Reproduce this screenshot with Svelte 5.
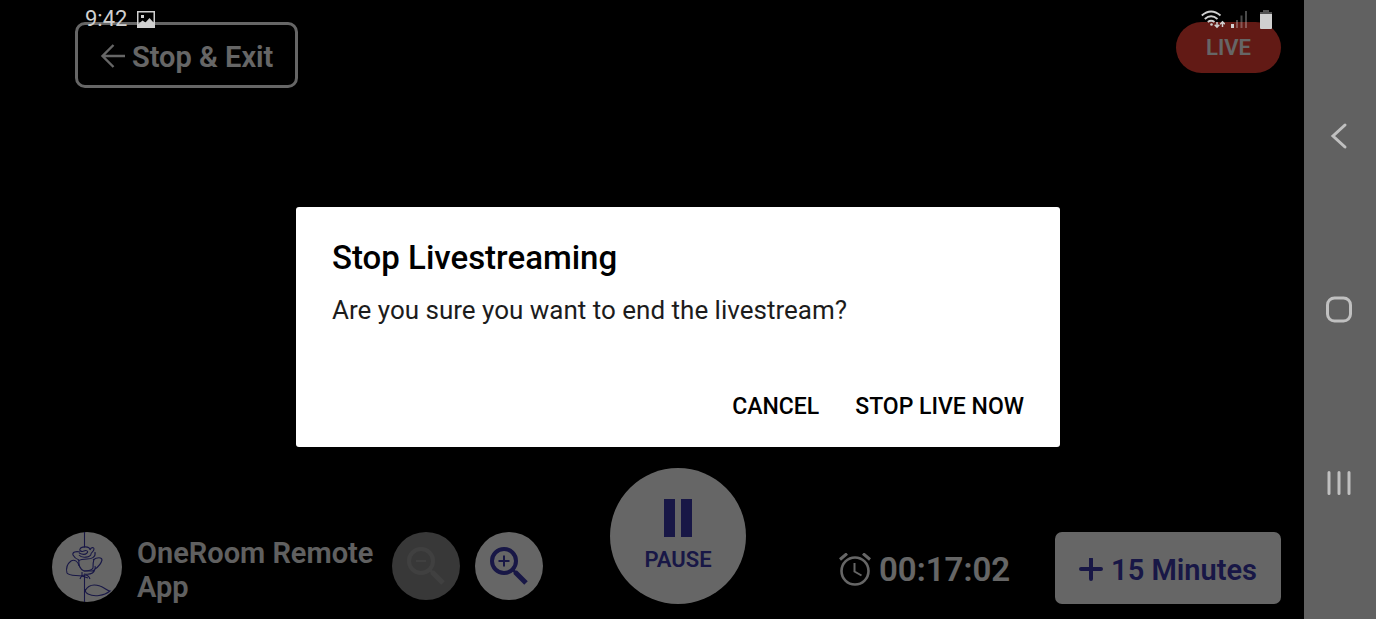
<script lang="ts">
  let time = $state('9:42');
  let dialogOpen = $state(true);
  let paused = $state(false);
  let seconds = $state(17 * 60 + 2);

  const pad = (n: number) => String(n).padStart(2, '0');

  let elapsed = $derived(
    `${pad(Math.floor(seconds / 3600))}:${pad(Math.floor(seconds / 60) % 60)}:${pad(seconds % 60)}`
  );
</script>

<div class="device">
  <div class="screen">
    <main class="stream">
      <header class="top">
        <button class="exit" onclick={() => (dialogOpen = true)}>
          <svg width="26" height="26" viewBox="0 0 26 26" fill="none" stroke="currentColor" stroke-width="2.4">
            <path d="M25 12H2.500M13.500 1L2.500 12L13.500 23" />
          </svg>
          Stop &amp; Exit
        </button>
        <span class="live">LIVE</span>
      </header>

      <footer class="bottom">
        <div class="left">
          <svg class="avatar" viewBox="0 0 70 70" fill="none" stroke="#3c3aae" stroke-width="1.1">
            <circle cx="35" cy="35" r="35" fill="#fff" stroke="none" />
            <path d="M32.500 0V15.500M32.500 43V70" />
            <path d="M38 18c0-4-9-4-10-1-1 2 2 3 4 2s5 0 3 2-6 1-8 0M38 18c1-3 4-3 4-1 0 3-3 3-3 5 0 3-9 5-12 1" />
            <path d="M28 20c-4-1-8 0-7 3 1 2 3 4 6 5M43 20c1 5-3 7-8 7-4 0-6 0-9 2" />
            <path d="M27 28c-1 6 1 9 5 11 4 0 8-1 9-3 0-4 0-6 1-9" />
            <path d="M27 34c-1-5-5-7-8-5-4 3-5 8-4 12 2 3 8 2 15 3v-4" />
            <path d="M41 28c4-3 9-3 9 0-1 4-4 7-7 9-1 4-5 6-11 5M43 34c1 3-1 5-4 5h-7" />
            <path d="M28 47c1-3 3-4 5-4 2 0 4 1 5 4M30 44l6 2" />
            <path d="M33 59c3-6 9-7 15-5 4 1 7 5 10 5-6 5-16 6-22 3-2-1-3-3-3-5" />
          </svg>
          <p class="name">OneRoom Remote App</p>
          <button class="round" aria-label="Zoom out" disabled>
            <svg width="38" height="38" viewBox="0 0 38 38" fill="none" stroke="currentColor">
              <circle cx="14" cy="14" r="12" stroke-width="4" />
              <path d="M9 14h10" stroke-width="2" />
              <path d="M22 22l4 4" stroke-width="3" />
              <path d="M25 25l11 11" stroke-width="5" />
            </svg>
          </button>
          <button class="round" aria-label="Zoom in">
            <svg width="38" height="38" viewBox="0 0 38 38" fill="none" stroke="currentColor">
              <circle cx="14" cy="14" r="12" stroke-width="4" />
              <path d="M8.500 14h11M14 8.500v11" stroke-width="2" />
              <path d="M22 22l4 4" stroke-width="3" />
              <path d="M25 25l11 11" stroke-width="5" />
            </svg>
          </button>
        </div>

        <button class="pause" onclick={() => (paused = !paused)}>
          <svg width="28" height="38" viewBox="0 0 28 38" fill="currentColor">
            {#if paused}
              <path d="M0 0L28 19L0 38z" />
            {:else}
              <path d="M0 0h11v38H0zM17 0h11v38H17z" />
            {/if}
          </svg>
          {paused ? 'RESUME' : 'PAUSE'}
        </button>

        <div class="right">
          <div class="timer">
            <svg width="32" height="34" viewBox="0 0 32 34" fill="none" stroke="currentColor" stroke-width="2.600">
              <circle cx="16" cy="18" r="13.500" />
              <path d="M15.500 10v8.500l7 4" stroke-width="2" />
              <path d="M1 6.500l7-6M31 6.500l-7-6" stroke-width="3" />
            </svg>
            <span>{elapsed}</span>
          </div>
          <button class="extend">
            <svg width="24" height="24" viewBox="0 0 24 24" fill="none" stroke="currentColor" stroke-width="4" stroke-linecap="round">
              <path d="M12 1v20M2 11h20" />
            </svg>
            15 Minutes
          </button>
        </div>
      </footer>
    </main>

    {#if dialogOpen}
      <div class="scrim">
        <div class="dialog" role="alertdialog" aria-labelledby="dialog-title" aria-describedby="dialog-text">
          <h2 id="dialog-title">Stop Livestreaming</h2>
          <p id="dialog-text">Are you sure you want to end the livestream?</p>
          <div class="actions">
            <button onclick={() => (dialogOpen = false)}>CANCEL</button>
            <button onclick={() => (dialogOpen = false)}>STOP LIVE NOW</button>
          </div>
        </div>
      </div>
    {/if}

    <!-- Android status bar, drawn over the app -->
    <div class="status">
      <span>{time}</span>
      <svg width="18" height="17" viewBox="0 0 18 17">
        <path fill="currentColor" fill-rule="evenodd" d="M0 0h18v17H0zM1.500 1.500V13l4-3.500 3 2 4-4.500 4 4.500V1.500zM4 4h3v3H4z" />
      </svg>
      <div class="signals">
        <svg width="24" height="19" viewBox="0 0 24 19" fill="none" stroke="currentColor" stroke-width="1.900">
          <path d="M.8 5.500Q10 -2.500 19.500 5.500M3.800 9Q10 3.500 16.500 9M6.800 12Q10 9.500 13.500 12" />
          <circle cx="10.500" cy="14.500" r="1.300" fill="currentColor" stroke="none" />
          <path d="M16 12v5M13.700 14.800l2.300 2.400 2.300-2.400M21.500 17v-5M19.200 14.200l2.300-2.400 2.300 2.400" stroke-width="1.500" />
        </svg>
        <svg width="17" height="18" viewBox="0 0 17 18" fill="currentColor">
          <path d="M0 14h3v4H0z" />
          <path d="M5 10h2v8H5zM9.500 5.500h2v12.500h-2zM14 1h2v17h-2z" opacity=".35" />
        </svg>
        <svg class="battery" width="12" height="19" viewBox="0 0 12 19" fill="currentColor">
          <path d="M3 0h6v2h3v2H0V2h3z" opacity=".4" />
          <path d="M0 4h12v14q0 1-1 1H1q-1 0-1-1z" />
        </svg>
      </div>
    </div>
  </div>

  <nav class="keys">
    <button aria-label="Back">
      <svg width="28" height="28" viewBox="0 0 28 28" fill="none" stroke="currentColor" stroke-width="3" stroke-linecap="round">
        <path d="M20 3L8 14L20 25" />
      </svg>
    </button>
    <button aria-label="Home">
      <svg width="28" height="28" viewBox="0 0 28 28" fill="none" stroke="currentColor" stroke-width="3">
        <rect x="2.500" y="2" width="23" height="23" rx="7" />
      </svg>
    </button>
    <button aria-label="Recent apps">
      <svg width="28" height="28" viewBox="0 0 28 28" fill="none" stroke="currentColor" stroke-width="3" stroke-linecap="round">
        <path d="M4 3.500v21M14 3.500v21M24 3.500v21" />
      </svg>
    </button>
  </nav>
</div>

<style>
  :global(body) {
    margin: 0;
    background: #000;
  }

  .device {
    display: flex;
    min-height: 100vh;
    font-family: Roboto, 'Liberation Sans', sans-serif;
  }

  button {
    display: flex;
    align-items: center;
    justify-content: center;
    margin: 0;
    padding: 0;
    border: none;
    background: none;
    color: inherit;
    font: inherit;
    white-space: nowrap;
    cursor: pointer;
  }

  svg {
    display: block;
    flex: none;
  }

  .screen {
    position: relative;
    display: flex;
    flex: 1;
    background: #000;
  }

  .stream {
    display: flex;
    flex: 1;
    flex-direction: column;
    justify-content: space-between;
    padding: 22px 0 15px 52px;
    color: #fff;
  }

  .top {
    display: flex;
    justify-content: space-between;
    align-items: flex-start;
    padding: 0 23px;
  }

  .exit {
    gap: 6px;
    padding: 14px 22px 10px;
    border: 3px solid #fff;
    border-radius: 10px;
    font-size: 29px;
    font-weight: 600;
    line-height: 36px;
  }

  .live {
    padding: 1px 30px 0;
    border-radius: 26px;
    background: #f44336;
    font-size: 22px;
    font-weight: 600;
    line-height: 50px;
  }

  .bottom {
    display: grid;
    grid-template-columns: 1fr auto 1fr;
    align-items: end;
  }

  .left {
    display: flex;
    align-items: flex-start;
    gap: 15px;
  }

  .avatar {
    width: 70px;
    height: 70px;
  }

  .name {
    width: 240px;
    margin: 4px 0 0;
    font-size: 29px;
    font-weight: 600;
    line-height: 34px;
    color: #f0f0f0;
  }

  .round {
    flex: none;
    width: 68px;
    height: 68px;
    border-radius: 50%;
    background: #fff;
    color: #3c3aae;
  }

  .round:disabled {
    background: #8c8c8c;
    color: #a0a0a0;
    cursor: default;
  }

  .pause {
    flex-direction: column;
    gap: 10px;
    width: 136px;
    height: 136px;
    border-radius: 50%;
    background: #fff;
    color: #3c3aae;
    font-size: 22px;
    font-weight: 600;
    line-height: 26px;
  }

  .right {
    display: flex;
    align-items: center;
    justify-content: flex-end;
    gap: 45px;
    padding-right: 23px;
  }

  .timer {
    display: flex;
    align-items: center;
    gap: 8px;
    padding-top: 4px;
    font-size: 33px;
    font-weight: 600;
    line-height: 40px;
  }

  .extend {
    gap: 8px;
    padding: 20px 24px 16px;
    border-radius: 7px;
    background: #fff;
    color: #3c3aae;
    font-size: 29px;
    font-weight: 600;
    line-height: 36px;
  }

  .scrim {
    position: absolute;
    inset: 0;
    display: flex;
    align-items: center;
    justify-content: center;
    padding: 34px 0 0 52px;
    background: rgba(0, 0, 0, 0.6);
  }

  .dialog {
    box-sizing: border-box;
    width: 764px;
    max-width: 90%;
    padding: 30px 36px 22px;
    border-radius: 3px;
    background: #fff;
    color: #000;
  }

  .dialog h2 {
    margin: 0;
    font-size: 33px;
    font-weight: 500;
    line-height: 42px;
  }

  .dialog p {
    margin: 12px 0 60px;
    font-size: 26px;
    line-height: 38px;
    color: #1c1c1c;
  }

  .actions {
    display: flex;
    justify-content: flex-end;
    gap: 36px;
    font-size: 23px;
    font-weight: 500;
    line-height: 36px;
  }

  .status {
    position: absolute;
    top: 7px;
    left: 85px;
    right: 32px;
    display: flex;
    align-items: center;
    gap: 10px;
    color: #d0d0d0;
    font-size: 22px;
    line-height: 24px;
    pointer-events: none;
  }

  .signals {
    display: flex;
    align-items: center;
    gap: 6px;
    margin-left: auto;
  }

  .battery {
    margin-left: 6px;
  }

  .keys {
    display: flex;
    flex: none;
    flex-direction: column;
    justify-content: center;
    box-sizing: border-box;
    width: 72px;
    padding-right: 2px;
    background: #616161;
    color: #c0c0c0;
  }

  .keys button {
    height: 28vh;
  }
</style>
